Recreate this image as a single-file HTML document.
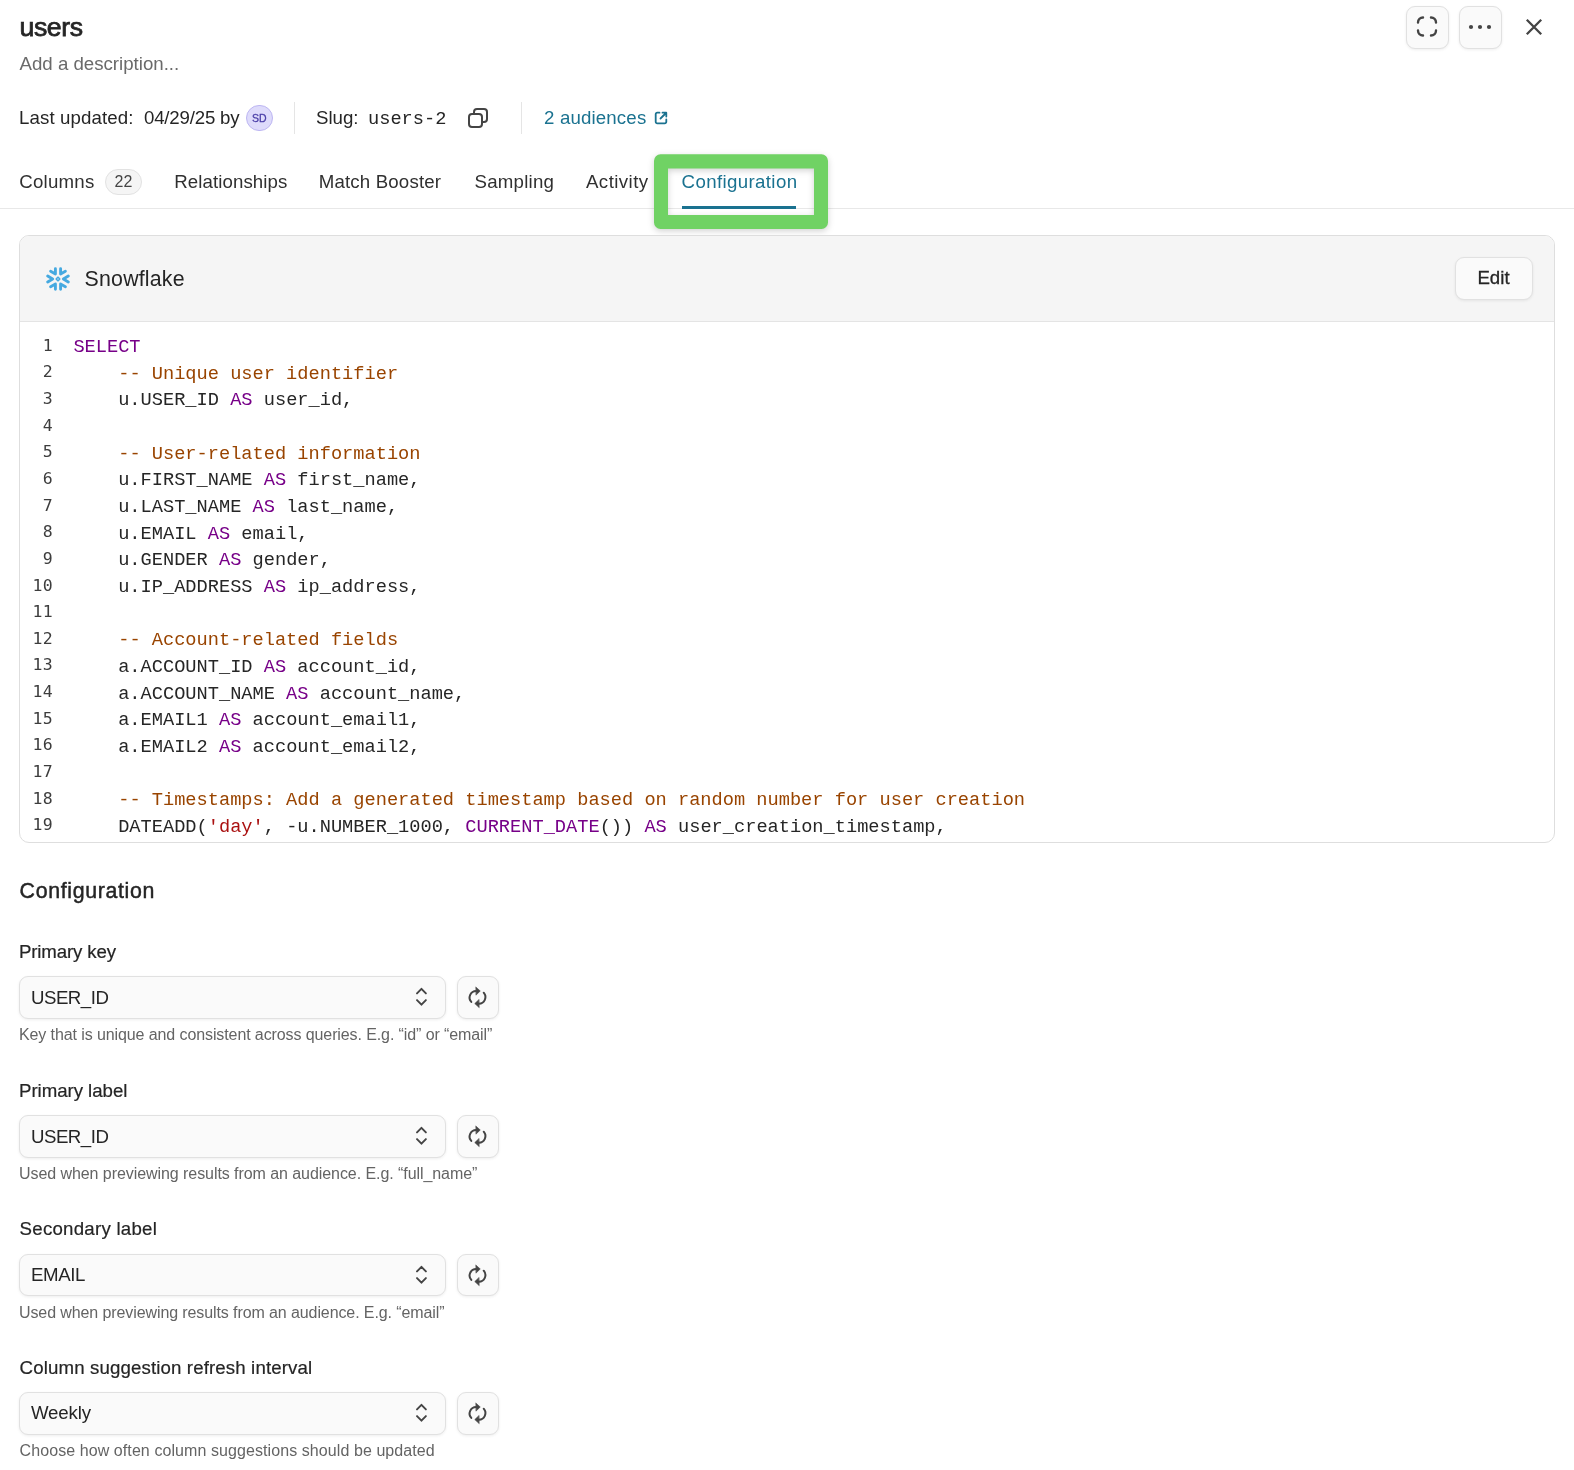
<!DOCTYPE html>
<html lang="en">
<head>
<meta charset="utf-8">
<title>users</title>
<style>
*{box-sizing:border-box;margin:0;padding:0}
html,body{width:1574px;height:1470px;background:#fff;overflow:hidden}
body{will-change:transform;position:relative;font-family:"Liberation Sans",sans-serif;font-size:18.67px;color:#252525;line-height:1}
.abs{position:absolute;white-space:nowrap}
.t{position:absolute;white-space:nowrap;line-height:28px;height:28px}
.title{left:19.5px;top:10.5px;font-size:26.67px;line-height:32px;height:32px;-webkit-text-stroke:0.75px #252525;letter-spacing:-0.4px}
.desc{left:19.5px;top:49.5px;color:#6a6a6a}
.meta{top:104px}
.vdiv{position:absolute;width:1px;background:#e5e5e5;top:102px;height:32px}
.avatar{position:absolute;left:246px;top:104.6px;width:26.67px;height:26.67px;border-radius:50%;background:#dedbfb;border:1px solid #bdb6f2;color:#4b3fa8;font-size:10.5px;line-height:24.67px;text-align:center;letter-spacing:0;-webkit-text-stroke:0.3px #4b3fa8}
.mono{font-family:"Liberation Mono",monospace}
.link{color:#1a7290}
.tab{top:168px;color:#303030}.tab.link{color:#1a7290}
.badge{position:absolute;left:105px;top:169px;width:37px;height:26px;border-radius:13px;background:#f5f5f5;border:1px solid #e2e2e2;font-size:16px;line-height:23.4px;text-align:center;color:#454545}
.hline{position:absolute;left:0;top:208px;width:1574px;height:1px;background:#e8e8e8}
.hl{position:absolute;left:654px;top:154px;width:174px;height:75px;border:14px solid #70d264;border-radius:8px;box-shadow:0 2px 6px rgba(0,0,0,.15)}
.hl i{position:absolute;left:0;top:0;right:0;bottom:0;box-shadow:inset 0 0 3px rgba(0,0,0,.25)}
.uline{position:absolute;left:682px;top:206px;width:114px;height:3px;background:#1a7290}
.ibtn{position:absolute;width:42.67px;height:42.67px;border-radius:9px;background:#fafafa;border:1px solid #e1e1e1;box-shadow:0 1px 3px rgba(0,0,0,.07)}
.ibtn svg,.ico{position:absolute}
.card{position:absolute;left:19px;top:235px;width:1536px;height:608px;border:1px solid #dedede;border-radius:10px;background:#fff;overflow:hidden}
.chead{position:absolute;left:0;top:0;width:100%;height:86px;background:#f5f5f5;border-bottom:1px solid #e4e4e4}
.edit{position:absolute;left:1435px;top:21px;width:78px;height:42.67px;border-radius:9px;background:#fafafa;border:1px solid #e1e1e1;box-shadow:0 1px 3px rgba(0,0,0,.07);font-size:18.67px;line-height:40.6px;text-align:center;padding-right:1px;-webkit-text-stroke:0.3px #252525}
.code{position:absolute;left:0;top:98px;width:100%}
.ln{height:26.667px;position:relative;white-space:pre;font-family:"Liberation Mono",monospace;font-size:18.67px;line-height:26.667px;color:#262626;padding-left:53.4px}
.ln b{position:absolute;left:0;top:-1.4px;width:32.9px;letter-spacing:0.3px;text-align:right;font-weight:normal;font-family:"DejaVu Sans Mono",monospace;font-size:16.5px;color:#3d3d3d}
.k{color:#770088}.c{color:#994400}.s{color:#aa1111}
.h2{left:19.6px;letter-spacing:0.65px;top:876px;font-size:21.33px;-webkit-text-stroke:0.45px #252525;line-height:30px;height:30px}
.lab{left:19px;-webkit-text-stroke:0.2px #252525}
.sel{position:absolute;left:19px;width:427px;height:42.67px;border-radius:9px;background:#fafafa;border:1px solid #e1e1e1;box-shadow:0 1px 3px rgba(0,0,0,.07);padding-left:11px;line-height:41.6px;font-size:18.67px;white-space:nowrap}
.sel svg{position:absolute;left:393px;top:9.2px}
.help{left:19px;font-size:16px;color:#646464;line-height:22px;height:22px}
</style>
</head>
<body>

<div class="t title">users</div>
<div class="t desc">Add a description...</div>

<div class="ibtn" style="left:1406px;top:6px">
<svg width="42" height="42" viewBox="0 0 42 42" style="left:-0.67px;top:-0.6px" fill="none" stroke="#444" stroke-width="2.4" stroke-linecap="round"><path d="M12 16.5a5 5 0 0 1 5-5M25 11.5a5 5 0 0 1 5 5M30 24.5a5 5 0 0 1-5 5M17 29.5a5 5 0 0 1-5-5"/></svg>
</div>
<div class="ibtn" style="left:1459px;top:6px">
<svg width="42" height="42" viewBox="0 0 42 42" style="left:-0.67px;top:-0.8px" fill="#444"><circle cx="12" cy="21" r="2.1"/><circle cx="21" cy="21" r="2.1"/><circle cx="30" cy="21" r="2.1"/></svg>
</div>
<svg class="ico" style="left:1524.2px;top:17.2px" width="20" height="20" viewBox="0 0 20 20" fill="none" stroke="#444" stroke-width="2.3"><path d="M2.8 2.8l14.4 14.4M17.2 2.8L2.8 17.2"/></svg>

<div class="t meta" style="left:19px;letter-spacing:0.12px">Last updated:</div>
<div class="t meta" style="left:144px;letter-spacing:-0.19px">04/29/25 by</div>
<div class="avatar">SD</div>
<div class="vdiv" style="left:294px"></div>
<div class="t meta" style="left:316px">Slug:</div>
<div class="t meta mono" style="left:368px;top:105px">users-2</div>
<svg class="ico" style="left:466px;top:106px" width="24" height="24" viewBox="0 0 24 24" fill="none" stroke="#444" stroke-width="2"><rect x="3" y="8" width="13" height="13" rx="3"/><path d="M8 8V6a3 3 0 0 1 3-3h7a3 3 0 0 1 3 3v7a3 3 0 0 1-3 3h-2"/></svg>
<div class="vdiv" style="left:521px"></div>
<div class="t meta link" style="left:544px;letter-spacing:0.16px">2 audiences</div>
<svg class="ico" style="left:653.3px;top:110.2px" width="16" height="16" viewBox="0 0 16 16" fill="none" stroke="#1a7290" stroke-width="1.8" stroke-linecap="round" stroke-linejoin="round"><path d="M6.5 2.7H4.2a1.5 1.5 0 0 0-1.5 1.5v7.6a1.5 1.5 0 0 0 1.5 1.5h7.6a1.5 1.5 0 0 0 1.5-1.5V9.5M9.5 2.7h3.8v3.8M13 3L7.5 8.5"/></svg>

<div class="t tab" style="left:19.3px;letter-spacing:0.23px">Columns</div>
<div class="badge">22</div>
<div class="t tab" style="left:174.2px;letter-spacing:0.1px">Relationships</div>
<div class="t tab" style="left:318.7px;letter-spacing:0.17px">Match Booster</div>
<div class="t tab" style="left:474.5px;letter-spacing:0.24px">Sampling</div>
<div class="t tab" style="left:586px;letter-spacing:0.43px">Activity</div>
<div class="hline"></div>
<svg class="ico" style="left:640px;top:140px;filter:drop-shadow(0 2px 3px rgba(0,0,0,.18))" width="200" height="100" viewBox="640 140 200 100"><path fill="#70d264" fill-rule="evenodd" d="M660.5 154.3h161a6.5 6.5 0 0 1 6.5 6.5v61.7a6.5 6.5 0 0 1-6.5 6.5h-161a6.5 6.5 0 0 1-6.5-6.5v-61.7a6.5 6.5 0 0 1 6.5-6.5zM668 168.6v46.4h146v-46.4z"/></svg>
<div class="t tab link" style="left:681.6px;letter-spacing:0.37px">Configuration</div>
<div class="uline"></div>

<div class="card">
<div class="chead">
<svg class="ico" style="left:25.5px;top:30.5px" width="24" height="24" viewBox="-12.5 -12.5 25 25" fill="none" stroke="#45a9e0" stroke-width="3" stroke-linecap="round" stroke-linejoin="round">
<g><path d="M-2.7 -10.7V-5.2L-7.7 -8"/><path d="M2.7 -10.7V-5.2L7.7 -8"/></g>
<g transform="rotate(180)"><path d="M-2.7 -10.7V-5.2L-7.7 -8"/><path d="M2.7 -10.7V-5.2L7.7 -8"/></g>
<path d="M-10.7 -3.1L-5.6 0L-10.7 3.1"/>
<path transform="rotate(180)" d="M-10.7 -3.1L-5.6 0L-10.7 3.1"/>
<rect x="-1.4" y="-1.4" width="2.8" height="2.8" transform="rotate(45)" stroke-width="1.4" fill="#b5dcf2"/>
</svg>
<div class="t" style="left:64.6px;top:29px;font-size:21.33px;letter-spacing:0.2px">Snowflake</div>
<div class="edit">Edit</div>
</div>
<div class="code">
<div class="ln"><b>1</b><span class="k">SELECT</span></div>
<div class="ln"><b>2</b>    <span class="c">-- Unique user identifier</span></div>
<div class="ln"><b>3</b>    u.USER_ID <span class="k">AS</span> user_id,</div>
<div class="ln"><b>4</b></div>
<div class="ln"><b>5</b>    <span class="c">-- User-related information</span></div>
<div class="ln"><b>6</b>    u.FIRST_NAME <span class="k">AS</span> first_name,</div>
<div class="ln"><b>7</b>    u.LAST_NAME <span class="k">AS</span> last_name,</div>
<div class="ln"><b>8</b>    u.EMAIL <span class="k">AS</span> email,</div>
<div class="ln"><b>9</b>    u.GENDER <span class="k">AS</span> gender,</div>
<div class="ln"><b>10</b>    u.IP_ADDRESS <span class="k">AS</span> ip_address,</div>
<div class="ln"><b>11</b></div>
<div class="ln"><b>12</b>    <span class="c">-- Account-related fields</span></div>
<div class="ln"><b>13</b>    a.ACCOUNT_ID <span class="k">AS</span> account_id,</div>
<div class="ln"><b>14</b>    a.ACCOUNT_NAME <span class="k">AS</span> account_name,</div>
<div class="ln"><b>15</b>    a.EMAIL1 <span class="k">AS</span> account_email1,</div>
<div class="ln"><b>16</b>    a.EMAIL2 <span class="k">AS</span> account_email2,</div>
<div class="ln"><b>17</b></div>
<div class="ln"><b>18</b>    <span class="c">-- Timestamps: Add a generated timestamp based on random number for user creation</span></div>
<div class="ln"><b>19</b>    DATEADD(<span class="s">'day'</span>, -u.NUMBER_1000, <span class="k">CURRENT_DATE</span>()) <span class="k">AS</span> user_creation_timestamp,</div>
</div>
</div>

<div class="t h2">Configuration</div>

<div class="t lab" style="top:938px;letter-spacing:-0.15px">Primary key</div>
<div class="sel" style="top:976px"><span style="letter-spacing:-0.5px;margin-left:0px">USER_ID</span><svg width="20" height="22" viewBox="0 0 20 22" fill="none" stroke="#444" stroke-width="1.9" stroke-linecap="round" stroke-linejoin="round"><path d="M4 7.4L8.45 2.8L12.9 7.4M4 14.1L8.45 18.7L12.9 14.1"/></svg></div>
<div class="ibtn" style="width:42px;left:457px;top:976px"><svg width="42" height="42" viewBox="0 0 42 42" style="left:-1px;top:-1px" fill="none" stroke="#444" stroke-width="2" stroke-linecap="round"><g transform="translate(20.5 21.3)"><g><path d="M-6.2 4.6A6.6 6.6 0 0 1 -1.3 -6.4"/><path d="M-1.5 -10.1L2.75 -6.3L-1.3 -2.4Z" fill="#444" stroke-width="0.6" stroke-linejoin="round"/></g><g transform="rotate(180)"><path d="M-6.2 4.6A6.6 6.6 0 0 1 -1.3 -6.4"/><path d="M-1.5 -10.1L2.75 -6.3L-1.3 -2.4Z" fill="#444" stroke-width="0.6" stroke-linejoin="round"/></g></g></svg></div>
<div class="t help" style="top:1023.7px;letter-spacing:-0.1px">Key that is unique and consistent across queries. E.g. “id” or “email”</div>

<div class="t lab" style="top:1077px;letter-spacing:-0.04px">Primary label</div>
<div class="sel" style="top:1115px"><span style="letter-spacing:-0.5px;margin-left:0px">USER_ID</span><svg width="20" height="22" viewBox="0 0 20 22" fill="none" stroke="#444" stroke-width="1.9" stroke-linecap="round" stroke-linejoin="round"><path d="M4 7.4L8.45 2.8L12.9 7.4M4 14.1L8.45 18.7L12.9 14.1"/></svg></div>
<div class="ibtn" style="width:42px;left:457px;top:1115px"><svg width="42" height="42" viewBox="0 0 42 42" style="left:-1px;top:-1px" fill="none" stroke="#444" stroke-width="2" stroke-linecap="round"><g transform="translate(20.5 21.3)"><g><path d="M-6.2 4.6A6.6 6.6 0 0 1 -1.3 -6.4"/><path d="M-1.5 -10.1L2.75 -6.3L-1.3 -2.4Z" fill="#444" stroke-width="0.6" stroke-linejoin="round"/></g><g transform="rotate(180)"><path d="M-6.2 4.6A6.6 6.6 0 0 1 -1.3 -6.4"/><path d="M-1.5 -10.1L2.75 -6.3L-1.3 -2.4Z" fill="#444" stroke-width="0.6" stroke-linejoin="round"/></g></g></svg></div>
<div class="t help" style="top:1162.7px;letter-spacing:-0.066px">Used when previewing results from an audience. E.g. “full_name”</div>

<div class="t lab" style="top:1215px;left:19.6px;letter-spacing:0.25px">Secondary label</div>
<div class="sel" style="top:1254px;height:42px"><span style="letter-spacing:-0.4px;position:relative;top:-1px">EMAIL</span><svg width="20" height="22" viewBox="0 0 20 22" fill="none" stroke="#444" stroke-width="1.9" stroke-linecap="round" stroke-linejoin="round"><path d="M4 7.4L8.45 2.8L12.9 7.4M4 14.1L8.45 18.7L12.9 14.1"/></svg></div>
<div class="ibtn" style="width:42px;left:457px;top:1254px;height:42px"><svg width="42" height="42" viewBox="0 0 42 42" style="left:-1px;top:-1px" fill="none" stroke="#444" stroke-width="2" stroke-linecap="round"><g transform="translate(20.5 21.3)"><g><path d="M-6.2 4.6A6.6 6.6 0 0 1 -1.3 -6.4"/><path d="M-1.5 -10.1L2.75 -6.3L-1.3 -2.4Z" fill="#444" stroke-width="0.6" stroke-linejoin="round"/></g><g transform="rotate(180)"><path d="M-6.2 4.6A6.6 6.6 0 0 1 -1.3 -6.4"/><path d="M-1.5 -10.1L2.75 -6.3L-1.3 -2.4Z" fill="#444" stroke-width="0.6" stroke-linejoin="round"/></g></g></svg></div>
<div class="t help" style="top:1301.7px;letter-spacing:-0.1px">Used when previewing results from an audience. E.g. “email”</div>

<div class="t lab" style="top:1354px;left:19.6px;letter-spacing:0.13px">Column suggestion refresh interval</div>
<div class="sel" style="top:1392px"><span style="letter-spacing:-0.16px;position:relative;top:-0.8px">Weekly</span><svg width="20" height="22" viewBox="0 0 20 22" fill="none" stroke="#444" stroke-width="1.9" stroke-linecap="round" stroke-linejoin="round"><path d="M4 7.4L8.45 2.8L12.9 7.4M4 14.1L8.45 18.7L12.9 14.1"/></svg></div>
<div class="ibtn" style="width:42px;left:457px;top:1392px"><svg width="42" height="42" viewBox="0 0 42 42" style="left:-1px;top:-1px" fill="none" stroke="#444" stroke-width="2" stroke-linecap="round"><g transform="translate(20.5 21.3)"><g><path d="M-6.2 4.6A6.6 6.6 0 0 1 -1.3 -6.4"/><path d="M-1.5 -10.1L2.75 -6.3L-1.3 -2.4Z" fill="#444" stroke-width="0.6" stroke-linejoin="round"/></g><g transform="rotate(180)"><path d="M-6.2 4.6A6.6 6.6 0 0 1 -1.3 -6.4"/><path d="M-1.5 -10.1L2.75 -6.3L-1.3 -2.4Z" fill="#444" stroke-width="0.6" stroke-linejoin="round"/></g></g></svg></div>
<div class="t help" style="top:1439.7px;left:19.6px;letter-spacing:0.08px">Choose how often column suggestions should be updated</div>

</body>
</html>
